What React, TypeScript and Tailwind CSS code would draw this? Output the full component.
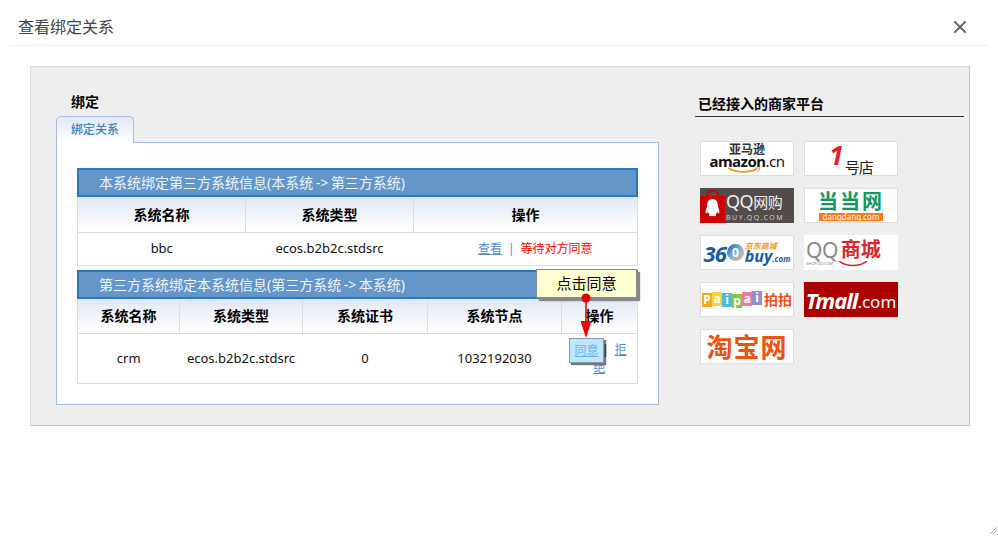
import { X } from 'lucide-react'

const cjk = { fontFamily: '"Noto Sans", "Noto Sans CJK SC", sans-serif' }

function Logo({ className = '', children }: { className?: string; children: React.ReactNode }) {
  return (
    <div className={`w-[94px] h-[35px] overflow-hidden flex items-center justify-center ${className}`}>
      {children}
    </div>
  )
}

function AmazonLogo() {
  return (
    <Logo className="bg-white border border-[#ddd] flex-col">
      <div className="text-[12px] leading-[11px] font-bold text-[#333]">亚马逊</div>
      <div className="text-[15px] leading-[12px] font-bold text-[#111] tracking-[-0.5px]">
        amazon<span className="font-normal">.cn</span>
      </div>
      <svg width="34" height="6" viewBox="0 0 34 6" className="-ml-[6px]">
        <path d="M1 1 C10 6 22 6 30 2" stroke="#e8992a" strokeWidth="1.6" fill="none" />
        <path d="M27 1 L33 1 L31 5" stroke="#e8992a" strokeWidth="1" fill="none" />
      </svg>
    </Logo>
  )
}

function YhdLogo() {
  return (
    <Logo className="bg-white border border-[#ddd] items-stretch">
      <span className="text-[26px] leading-[26px] font-bold italic text-[#e3202e] self-start mr-[1px]">1</span>
      <span className="text-[15px] leading-[16px] text-[#222] self-end whitespace-nowrap tracking-[-1px]">号店</span>
    </Logo>
  )
}

function QQBuyLogo() {
  return (
    <Logo className="bg-[#544c4a] justify-start">
      <div className="w-[25px] h-[35px] flex items-center justify-center shrink-0">
        <svg width="25" height="35" viewBox="0 0 25 35">
          <path d="M7 8 C7 1 18 1 18 8" stroke="#cc0000" strokeWidth="2" fill="none" />
          <rect x="0" y="8" width="25" height="27" fill="#cc0000" />
          <path d="M12.5 11 C8 11 7 15 7 19 C5.5 22 5 25 6.5 25.5 L8 24 C8.5 25.5 9 26 9.5 26.5 C8 27.5 9 28.5 12.5 28 C16 28.5 17 27.5 15.5 26.5 C16 26 16.5 25.5 17 24 L18.5 25.5 C20 25 19.5 22 18 19 C18 15 17 11 12.5 11 Z" fill="#fff" />
        </svg>
      </div>
      <div className="flex flex-col ml-[1px] text-[#eee]">
        <span className="text-[18px] leading-[22px] whitespace-nowrap tracking-[-0.5px]">
          QQ<span className="text-[15px]">网购</span>
        </span>
        <span className="text-[7px] leading-[9px] tracking-[1.5px] text-[#ccc] whitespace-nowrap">BUY.QQ.COM</span>
      </div>
    </Logo>
  )
}

function DangdangLogo() {
  return (
    <Logo className="bg-white border border-[#ddd] flex-col">
      <div className="text-[20px] leading-[22px] font-bold text-[#14965f] tracking-[2px] whitespace-nowrap">当当网</div>
      <div className="w-[64px] h-[8px] bg-[#f97a1c] text-white text-[8px] leading-[8px] text-center">dangdang.com</div>
    </Logo>
  )
}

function JdLogo() {
  return (
    <Logo className="bg-white border border-[#ddd]">
      <span className="text-[22px] leading-none font-bold italic text-[#1a5aa0] tracking-[-1px]">36</span>
      <span className="w-[17px] h-[17px] rounded-full bg-gradient-to-br from-[#1a5aa0] via-[#7fb2dc] to-[#f3b04a] text-white text-[12px] leading-[17px] text-center font-bold ml-[1px] shrink-0">
        0
      </span>
      <span className="flex flex-col items-start ml-[1px]">
        <span className="text-[8px] leading-[9px] text-[#f39a1e] italic font-bold whitespace-nowrap">京东商城</span>
        <span className="text-[16px] leading-[13px] font-bold italic text-[#1a5aa0] whitespace-nowrap">
          buy<span className="text-[8px]">.com</span>
        </span>
      </span>
    </Logo>
  )
}

function QQMallLogo() {
  return (
    <Logo className="bg-white flex-col items-start pl-[2px]">
      <div className="flex items-center">
        <span className="text-[21px] leading-[22px] text-[#8a8a8a] tracking-[-0.5px]">QQ</span>
        <span className="text-[20px] leading-[22px] font-bold text-[#d8262b] ml-[3px] whitespace-nowrap">商城</span>
      </div>
      <div className="flex items-start">
        <span className="text-[4px] leading-[6px] text-[#888] whitespace-nowrap">SHOP.QQ.COM</span>
        <svg width="30" height="6" viewBox="0 0 30 6" className="ml-[5px]">
          <path d="M1 0 C8 6 22 6 29 0" stroke="#d8262b" strokeWidth="1.6" fill="none" />
        </svg>
      </div>
    </Logo>
  )
}

function PaipaiLogo() {
  const letters = [
    { ch: 'P', c: 'bg-[#f5a623] mt-[1px]' },
    { ch: 'a', c: 'bg-[#f7d33c]' },
    { ch: 'i', c: 'bg-[#4fb8e8] mt-[1px]' },
    { ch: 'p', c: 'bg-[#8cc63f] mt-[2px]' },
    { ch: 'a', c: 'bg-[#ee79a8]' },
    { ch: 'i', c: 'bg-[#8f8fd0] -mt-[1px]' },
  ]
  return (
    <Logo className="bg-white border border-[#ddd]">
      <div className="flex">
        {letters.map((l, i) => (
          <span key={i} className={`w-[10px] h-[14px] text-white text-[12px] leading-[14px] font-bold text-center ${l.c}`}>
            {l.ch}
          </span>
        ))}
      </div>
      <span className="text-[14px] font-bold text-[#f0501e] ml-[2px] leading-none whitespace-nowrap">拍拍</span>
    </Logo>
  )
}

function TmallLogo() {
  return (
    <Logo className="bg-[#aa0000] text-white">
      <span className="text-[22px] leading-none font-bold italic tracking-[-1px]">Tmall</span>
      <span className="text-[17px] leading-none mt-[4px]">.com</span>
    </Logo>
  )
}

function TaobaoLogo() {
  return (
    <Logo className="bg-white border border-[#ddd]">
      <span className="text-[26px] leading-none font-bold text-[#f2500f] tracking-[1px] whitespace-nowrap">淘宝网</span>
    </Logo>
  )
}

const headCell =
  'border-r border-[#ddd] last:border-r-0 font-bold text-[14px] text-black bg-gradient-to-b from-[#e1e8f4] to-white'

function TitleBar({ children }: { children: React.ReactNode }) {
  return (
    <div className="h-[29px] bg-[#6397c9] border-2 border-[#2a78c0] text-[#eef4fa] text-[14px] leading-[25px] pl-[20px] whitespace-nowrap">
      {children}
    </div>
  )
}

export default function App() {
  return (
    <div className="relative w-[998px] h-[536px] bg-white overflow-hidden text-[#111]" style={cjk}>
      <div className="mx-[10px] h-[46px] border-b border-[#eee] flex items-center justify-between pl-[8px] pr-[18px] pt-[8px]">
        <h1 className="text-[16px] text-[#444]">查看绑定关系</h1>
        <X size={20} strokeWidth={2.4} className="text-[#666]" />
      </div>

      <div className="ml-[30px] mt-[20px] w-[940px] h-[360px] bg-[#eee] border border-[#ddd] border-r-[#bfc4c8] border-b-[#bfc4c8] flex pl-[25px]">
        <div className="w-[603px] shrink-0 pt-[25px]">
          <div className="pl-[15px] text-[14px] leading-[20px] font-bold text-black h-[24px]">绑定</div>
          <div className="w-[78px] h-[27px] -mb-px relative z-10 border border-b-0 border-[#a6bce3] rounded-t-[5px] bg-gradient-to-b from-[#e1e8f6] to-white text-[12px] leading-[26px] text-center font-medium text-[#3d82b8]">
            绑定关系
          </div>
          <div className="w-[603px] h-[263px] bg-white border border-[#a6bce3] pt-[25px] pl-[20px]">
            <div className="w-[561px]">
              <TitleBar>
                本系统绑定第三方系统信息(本系统<span className="mx-[2.5px]">-&gt;</span>第三方系统)
              </TitleBar>
              <table className="w-full table-fixed border-collapse border border-[#ddd] border-t-0">
                <thead>
                  <tr className="h-[35px] border-b border-[#ddd]">
                    <th className={`${headCell} w-[168px]`}>系统名称</th>
                    <th className={`${headCell} w-[168px]`}>系统类型</th>
                    <th className={headCell}>操作</th>
                  </tr>
                </thead>
                <tbody>
                  <tr className="h-[33px] text-[13px] text-center">
                    <td>bbc</td>
                    <td>ecos.b2b2c.stdsrc</td>
                    <td className="text-[12px] pl-[20px]">
                      <a className="text-[#5b8fc4] underline">查看</a>
                      <span className="text-[#5b8fc4] mx-[6px]">|</span>
                      <span className="text-[#f00]">等待对方同意</span>
                    </td>
                  </tr>
                </tbody>
              </table>

              <div className="mt-[4px]">
                <TitleBar>
                  第三方系统绑定本系统信息(第三方系统<span className="mx-[2.5px]">-&gt;</span>本系统)
                </TitleBar>
              </div>
              <table className="w-full table-fixed border-collapse border border-[#ddd] border-t-0">
                <thead>
                  <tr className="h-[35px] border-b border-[#ddd]">
                    <th className={`${headCell} w-[102px]`}>系统名称</th>
                    <th className={`${headCell} w-[123px]`}>系统类型</th>
                    <th className={`${headCell} w-[125px]`}>系统证书</th>
                    <th className={`${headCell} w-[134px]`}>系统节点</th>
                    <th className={headCell}>操作</th>
                  </tr>
                </thead>
                <tbody>
                  <tr className="h-[50px] text-[13px] text-center">
                    <td>crm</td>
                    <td>ecos.b2b2c.stdsrc</td>
                    <td>0</td>
                    <td>1032192030</td>
                    <td className="text-[12px] leading-[18px] px-[8px] text-[#5b8fc4] text-center">
                      <span className="underline">同意</span>
                      <span className="relative z-10 font-bold text-[#333] mx-[6px]">|</span>
                      <a className="underline">拒绝</a>
                    </td>
                  </tr>
                </tbody>
              </table>
            </div>
          </div>
        </div>

        <div className="ml-[36px] w-[269px] pt-[25px]">
          <div className="h-[25px] border-b border-[#333] pl-[3px] text-[14px] leading-[24px] font-bold text-black">
            已经接入的商家平台
          </div>
          <div className="grid grid-cols-[94px_94px] gap-x-[10px] gap-y-[12px] pl-[5px] pt-[24px]">
            <AmazonLogo />
            <YhdLogo />
            <QQBuyLogo />
            <DangdangLogo />
            <JdLogo />
            <QQMallLogo />
            <PaipaiLogo />
            <TmallLogo />
            <TaobaoLogo />
          </div>
        </div>
      </div>

      {/* guide overlay */}
      <div className="absolute left-[536px] top-[269px] w-[101px] h-[29px] bg-[#ffffd2] border border-[#8a8a8a] shadow-[3px_3px_1px_#888] text-[15px] leading-[27px] text-center text-black">
        点击同意
      </div>
      <div className="absolute left-[569px] top-[338px] w-[35px] h-[25px] bg-[#bfe6ff] border border-[#8a9aa8] shadow-[2px_2px_1px_#777] text-[12px] leading-[23px] text-center text-[#69b4ea] underline">
        同意
      </div>
      <svg className="absolute left-[578px] top-[292px]" width="18" height="48" viewBox="0 0 18 48">
        <circle cx="8" cy="6" r="4.5" fill="#e00000" />
        <line x1="8" y1="6" x2="8" y2="30" stroke="#e00000" strokeWidth="1.5" />
        <path d="M2.5 29 L13.5 29 L8 46 Z" fill="#f00000" />
      </svg>

      <svg className="absolute left-[989px] top-[526px]" width="9" height="9" viewBox="0 0 9 9">
        <path d="M1 8 L8 1 M4 8 L8 4" stroke="#a9b4d0" strokeWidth="1" />
      </svg>
    </div>
  )
}
